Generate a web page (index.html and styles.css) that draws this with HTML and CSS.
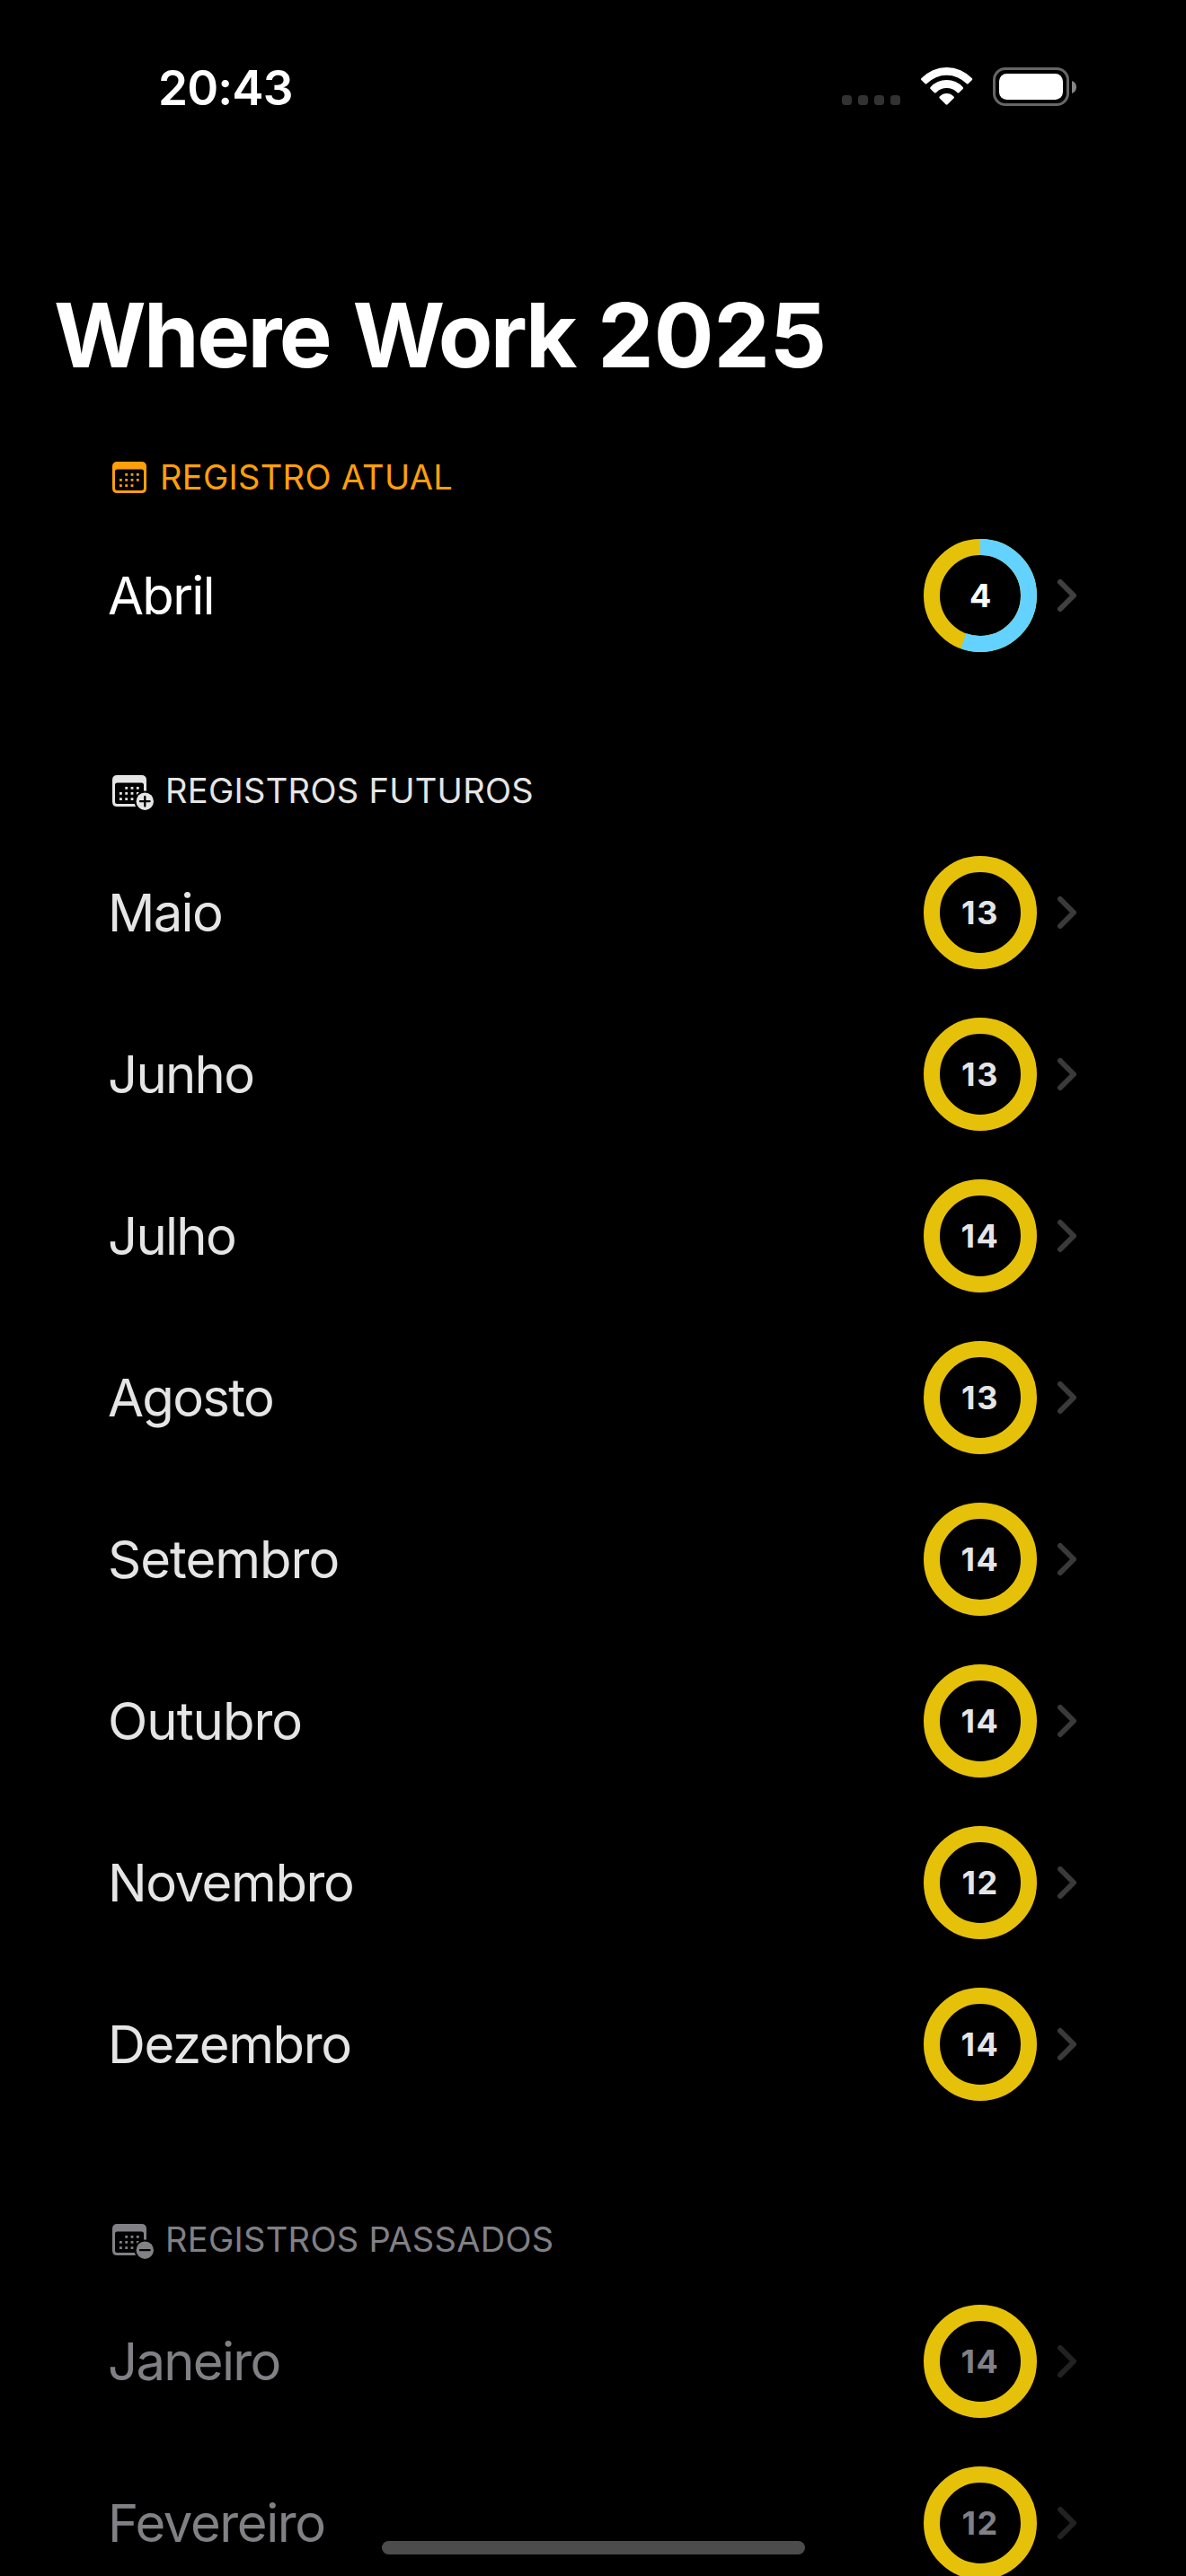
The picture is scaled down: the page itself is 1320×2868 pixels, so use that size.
FILE: index.html
```html
<!DOCTYPE html>
<html lang="pt-BR">
<head>
<meta charset="utf-8">
<title>Where Work 2025</title>
<link rel="stylesheet" href="styles.css">
</head>
<body>
<svg class="defs" aria-hidden="true">
  <symbol id="ring" viewBox="0 0 126 126">
    <circle cx="63" cy="63" r="54" fill="none" stroke="#e6c10a" stroke-width="18"/>
  </symbol>
  <symbol id="chevron" viewBox="0 0 21 36">
    <path d="M3 3 L18 18 L3 33" fill="none" stroke="currentColor" stroke-width="6" stroke-linecap="round" stroke-linejoin="round"/>
  </symbol>
  <symbol id="calendar" viewBox="0 0 38 35">
    <path fill="currentColor" fill-rule="evenodd" d="M5.5 0H32.5Q38 0 38 5.5V29.500Q38 35 32.500 35H5.500Q0 35 0 29.500V5.500Q0 0 5.500 0ZM5.500 8.500Q3 8.500 3 11V29.500Q3 32 5.500 32H32.500Q35 32 35 29.500V11Q35 8.500 32.500 8.500Z"/>
    <path fill="none" stroke="currentColor" stroke-width="2.8" d="M14.300 14.300h2.800m3.500 0h2.800m3.500 0h2.800M8 20.400h2.800m3.500 0h2.800m3.500 0h2.800m3.500 0h2.800M8 26.700h2.800m3.500 0h2.800m3.500 0h2.800"/>
  </symbol>
  <mask id="badge-cut" maskUnits="userSpaceOnUse" x="0" y="0" width="46" height="40">
    <rect width="46" height="40" fill="#fff"/>
    <circle cx="36.300" cy="29.200" r="11.700" fill="#000"/>
  </mask>
</svg>

<div class="screen">
  <header class="status">
    <span class="clock">20:43</span>
    <div class="indicators">
      <div class="signal"><i></i><i></i><i></i><i></i></div>
      <svg class="wifi" viewBox="0 0 172 126" fill="#fff">
        <path d="M1 37A116 116 0 0 1 171 37Q173 40 171 42L158 55Q155 57 152 54A92 92 0 0 0 20 54Q17 57 14 55L1 42Q-1 40 1 37Z"/>
        <path d="M32 66A73 73 0 0 1 140 66Q143 69 141 71L127 85Q124 87 121 84A48 48 0 0 0 51 84Q48 87 45 85L31 71Q29 69 32 66Z"/>
        <path d="M63 97A31 31 0 0 1 109 97Q113 100 110 103L89 124Q86 127 83 124L62 103Q59 100 63 97Z"/>
      </svg>
      <div class="battery"><div class="shell"><div class="charge"></div></div><svg class="tip" viewBox="0 0 5 14"><path d="M0 0Q5 2 5 7T0 14Z" fill="#868686"/></svg></div>
    </div>
  </header>

  <h1 class="title">Where Work <span class="year">2025</span></h1>

  <section class="group current">
    <h2 class="heading"><svg class="icon" viewBox="0 0 38 35"><use href="#calendar"/></svg>REGISTRO ATUAL</h2>
    <ul class="list">
      <li class="row"><span class="month wide">Abril</span><span class="gauge"><svg viewBox="0 0 126 126"><use href="#ring"/><circle cx="63" cy="63" r="54" fill="none" stroke="#64d2ff" stroke-width="18" stroke-dasharray="188.500 339.292" transform="rotate(-90 63 63)"/></svg><b class="single">4</b></span><svg class="chevron"><use href="#chevron"/></svg></li>
    </ul>
  </section>

  <section class="group future">
    <h2 class="heading"><svg class="icon" viewBox="0 0 38 35"><g mask="url(#badge-cut)"><use href="#calendar" width="38" height="35"/></g><path fill="currentColor" d="M26.600 29.200a9.700 9.700 0 1 0 19.400 0a9.700 9.700 0 1 0-19.400 0"/><path d="M31 29.200h10.600M36.300 23.900v10.600" stroke="#000" stroke-width="2.300" stroke-linecap="round"/></svg>REGISTROS FUTUROS</h2>
    <ul class="list">
      <li class="row"><span class="month wide">Maio</span><span class="gauge"><svg><use href="#ring"/></svg><b>13</b></span><svg class="chevron"><use href="#chevron"/></svg></li>
      <li class="row"><span class="month wide">Junho</span><span class="gauge"><svg><use href="#ring"/></svg><b>13</b></span><svg class="chevron"><use href="#chevron"/></svg></li>
      <li class="row"><span class="month wide">Julho</span><span class="gauge"><svg><use href="#ring"/></svg><b>14</b></span><svg class="chevron"><use href="#chevron"/></svg></li>
      <li class="row"><span class="month wide">Agosto</span><span class="gauge"><svg><use href="#ring"/></svg><b>13</b></span><svg class="chevron"><use href="#chevron"/></svg></li>
      <li class="row"><span class="month narrow">Setembro</span><span class="gauge"><svg><use href="#ring"/></svg><b>14</b></span><svg class="chevron"><use href="#chevron"/></svg></li>
      <li class="row"><span class="month narrow">Outubro</span><span class="gauge"><svg><use href="#ring"/></svg><b>14</b></span><svg class="chevron"><use href="#chevron"/></svg></li>
      <li class="row"><span class="month">Novembro</span><span class="gauge"><svg><use href="#ring"/></svg><b>12</b></span><svg class="chevron"><use href="#chevron"/></svg></li>
      <li class="row"><span class="month">Dezembro</span><span class="gauge"><svg><use href="#ring"/></svg><b>14</b></span><svg class="chevron"><use href="#chevron"/></svg></li>
    </ul>
  </section>

  <section class="group past">
    <h2 class="heading"><svg class="icon" viewBox="0 0 38 35"><g mask="url(#badge-cut)"><use href="#calendar" width="38" height="35"/></g><path fill="currentColor" d="M26.600 29.200a9.700 9.700 0 1 0 19.400 0a9.700 9.700 0 1 0-19.400 0"/><path d="M31 29.200h10.600" stroke="#000" stroke-width="2.300" stroke-linecap="round"/></svg>REGISTROS PASSADOS</h2>
    <ul class="list">
      <li class="row"><span class="month wide">Janeiro</span><span class="gauge"><svg><use href="#ring"/></svg><b>14</b></span><svg class="chevron"><use href="#chevron"/></svg></li>
      <li class="row"><span class="month">Fevereiro</span><span class="gauge"><svg><use href="#ring"/></svg><b>12</b></span><svg class="chevron"><use href="#chevron"/></svg></li>
    </ul>
  </section>

  <div class="home-indicator"></div>
</div>
</body>
</html>
```
FILE: styles.css
```css
* { box-sizing: border-box; }
body { margin: 0; background: #000; }
.defs { position: absolute; width: 0; height: 0; }

.screen {
  position: relative;
  width: 1320px;
  height: 2868px;
  overflow: hidden;
  background: #000;
  color: #fff;
  font-family: Inter, "Liberation Sans", sans-serif;
}

/* Status bar */
.status {
  display: flex;
  justify-content: space-between;
  align-items: center;
  height: 196px;
  padding: 0 122px 0 176px;
}
.clock { font-size: 53px; font-weight: 600; line-height: 64px; letter-spacing: -0.85px; }
.indicators { display: flex; align-items: center; height: 43px; margin-bottom: 3px; }
.signal { display: flex; gap: 7px; align-self: flex-end; margin: 0 23px 1px 0; }
.signal i { width: 11px; height: 11px; border-radius: 3.5px; background: #323232; }
.wifi { width: 57.3px; height: 42px; margin: 0 22.7px 1px 0; overflow: visible; }
.battery { display: flex; align-items: center; gap: 3px; }
.shell { width: 85px; height: 43px; padding: 4px; border: 3px solid #666; border-radius: 14px; }
.charge { height: 100%; border-radius: 8.5px; background: #fff; }
.tip { width: 5px; height: 14px; }

.title {
  margin: 117px 60px 68px;
  font-size: 99px;
  font-weight: 700;
  line-height: 120px;
  letter-spacing: -2.6px;
  word-spacing: 4.5px;
}
.year { letter-spacing: 0; }

/* Month groups */
.group { margin-bottom: 97px; }
.heading {
  display: flex;
  align-items: center;
  gap: 21px;
  height: 60px;
  margin: 0 0 16px;
  padding-left: 125px;
  font-size: 38px;
  font-weight: 400;
  letter-spacing: 0.31px;
}
.icon { width: 38px; height: 35px; overflow: visible; }
.current .heading { gap: 15px; margin-bottom: 12px; color: #ff9f0a; }

.list { margin: 0; padding: 0; list-style: none; }
.row { display: flex; align-items: center; height: 180px; padding: 0 122px 0 120px; }
.month { flex: 1; font-size: 58px; line-height: 70px; letter-spacing: -1.4px; }
.month.wide { letter-spacing: -1.7px; }
.month.narrow { letter-spacing: -1px; }

.gauge { display: grid; place-items: center; width: 126px; height: 126px; }
.gauge > * { grid-area: 1 / 1; }
.gauge svg { width: 126px; height: 126px; }
.gauge b { font-size: 36px; font-weight: 700; line-height: 44px; letter-spacing: 1.5px; }
.gauge .single { padding-left: 2px; }
.chevron { width: 21px; height: 36px; margin-left: 23px; color: #404040; }

.future { color: #e5e5e5; }
.future .chevron { color: #3a3a3a; }
.past { color: #808085; }
.past .chevron { color: #222; }

.home-indicator {
  position: absolute;
  left: 425px;
  bottom: 24px;
  width: 471px;
  height: 15px;
  border-radius: 7.5px;
  background: #4c4c4c;
}
```
